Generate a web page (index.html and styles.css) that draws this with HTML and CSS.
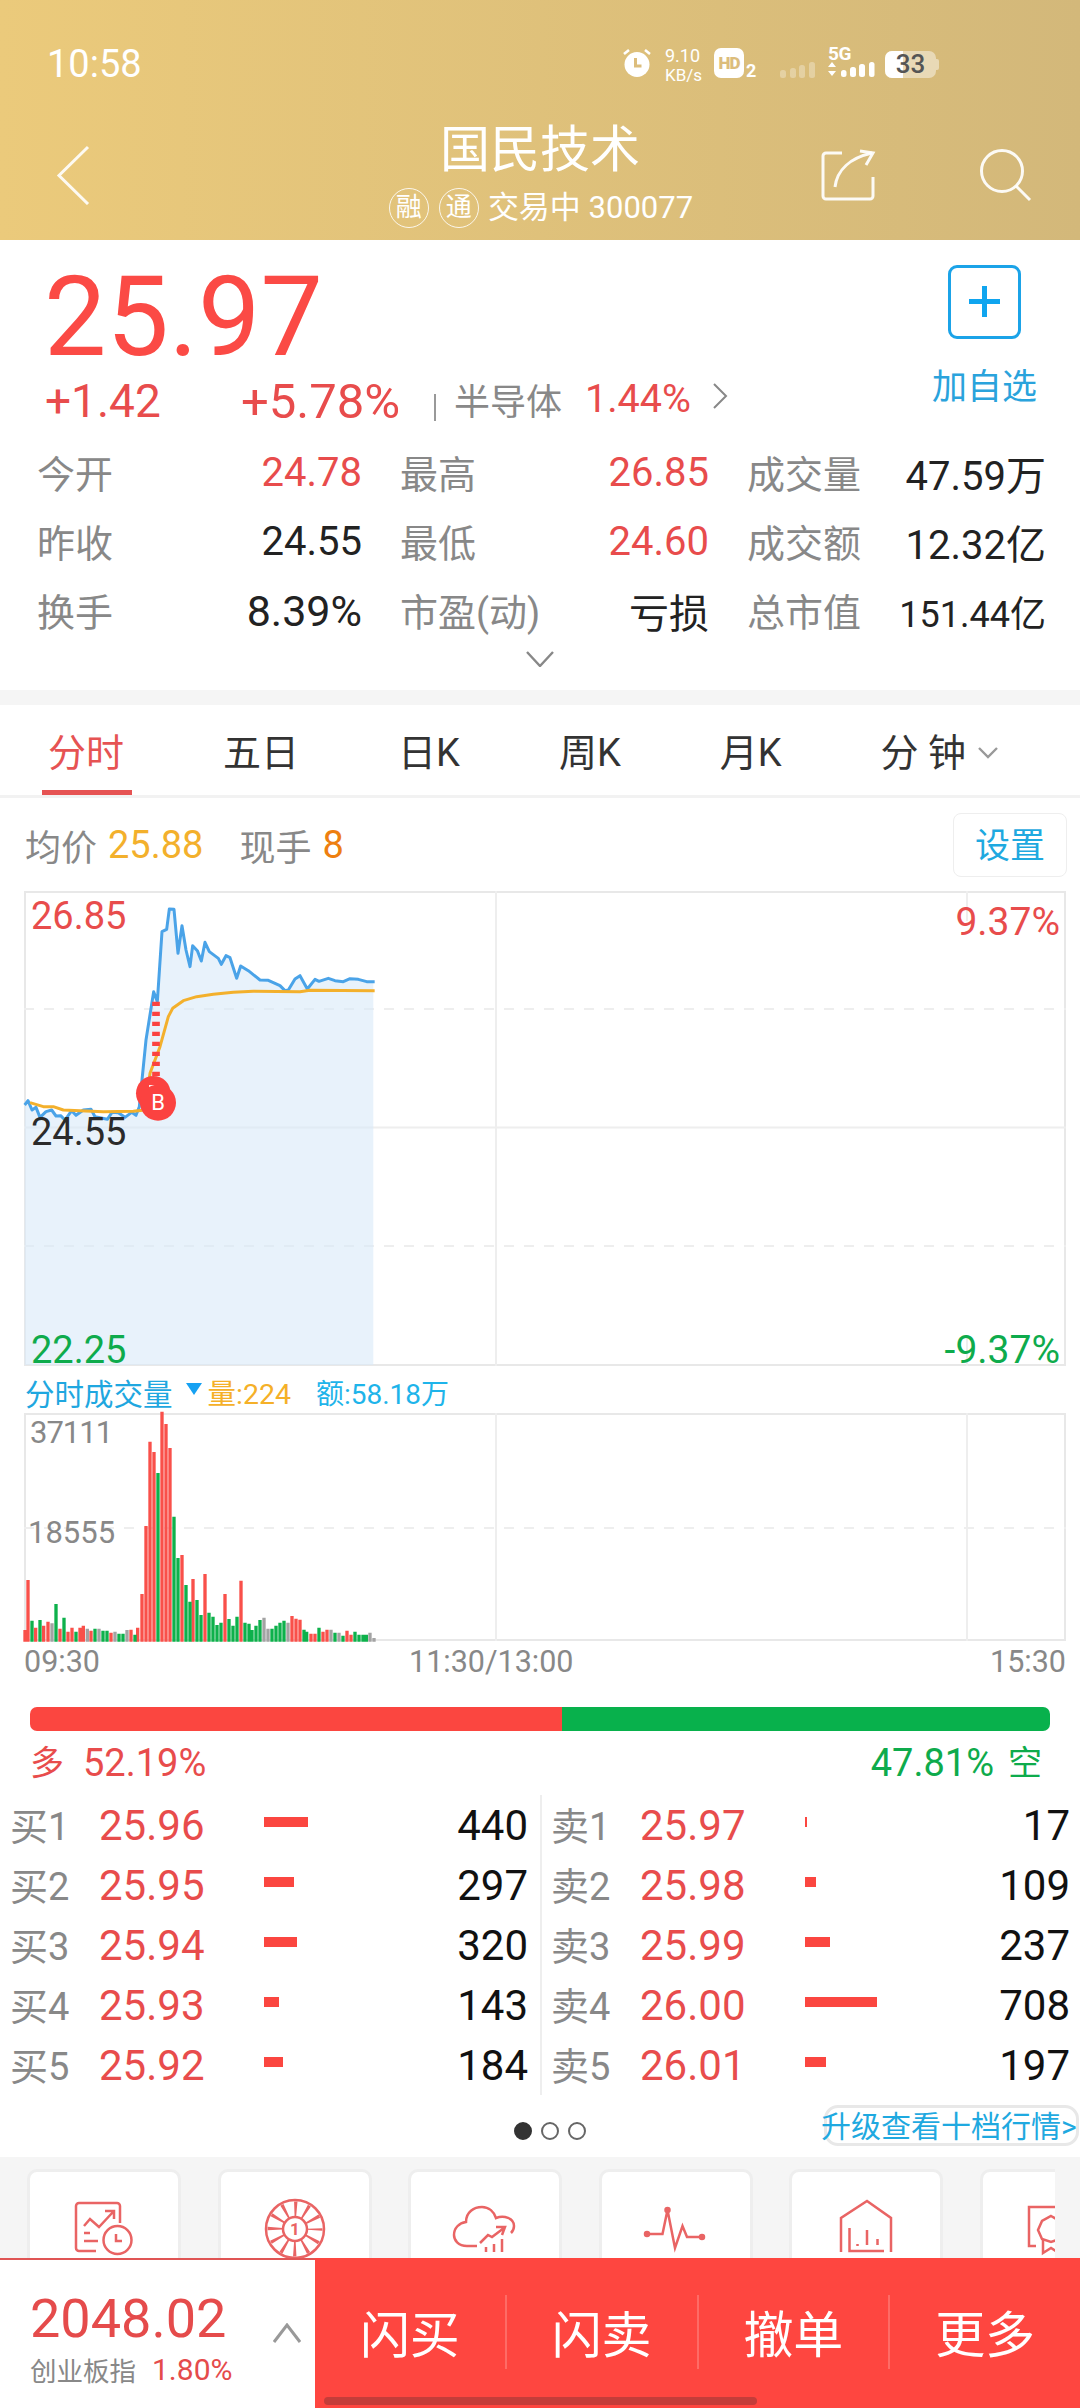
FILE: index.html
```html
<!DOCTYPE html>
<html lang="zh">
<head>
<meta charset="utf-8">
<title>国民技术</title>
<link rel="stylesheet" href="styles.css">
</head>
<body>
<div class="page">
  <header class="hero">
    <div class="status">
      <span class="time">10:58</span>
      <div class="status-right">
        <svg class="st-alarm" width="30" height="30" viewBox="0 0 30 30"><circle cx="15" cy="16.5" r="12.5" fill="#fff"/><path d="M2 6l5-4M28 6l-5-4" stroke="#fff" stroke-width="2.6" fill="none"/><path d="M13.5 10v8h6" stroke="#dcbd7c" stroke-width="3" fill="none"/></svg>
        <div class="net"><span class="net-a">9.10</span><span class="net-b">KB/s</span></div>
        <span class="hd">HD</span><span class="hd-n">2</span>
        <svg class="st-sig1" width="36" height="30" viewBox="0 0 36 30"><g fill="#fff" fill-opacity=".3"><rect x="0" y="21" width="6" height="8" rx="2.5"/><rect x="10" y="19" width="6" height="10" rx="2.5"/><rect x="19" y="16" width="6" height="13" rx="2.5"/><rect x="29" y="13" width="6" height="16" rx="2.5"/></g></svg>
        <div class="five">
          <span class="five-t">5G</span>
          <svg width="47" height="16" viewBox="0 0 47 16"><g fill="#fff"><path d="M0 5L4 0L8 5zM0 9h8L4 14z"/><rect x="13" y="8" width="5.500" height="7" rx="2.500"/><rect x="22" y="5" width="6" height="10" rx="2.500"/><rect x="31" y="2" width="6" height="13" rx="2.500"/><rect x="41" y="0" width="5.500" height="15" rx="2.500"/></g></svg>
        </div>
        <div class="battery"><span class="bat-fill"></span><span class="bat-num">33</span></div>
      </div>
    </div>
    <nav class="nav">
      <svg class="nav-back" width="34" height="60" viewBox="0 0 34 60"><path d="M32 2L3 30.500L32 59" fill="none" stroke="#fff" stroke-opacity=".9" stroke-width="3"/></svg>
      <div class="nav-mid">
        <div class="title">国民技术</div>
        <div class="sub"><span class="tag">融</span><span class="tag">通</span><span class="sub-t">交易中 300077</span></div>
      </div>
      <div class="nav-icons">
        <svg width="56" height="54" viewBox="0 0 56 54" fill="none" stroke="#fff" stroke-opacity=".92" stroke-width="3"><path d="M22 5H6a3 3 0 0 0-3 3V48a3 3 0 0 0 3 3H50a3 3 0 0 0 3-3V29"/><path d="M15 39C17 22 30 10 52 5"/><path d="M40 3L53 5L46 17"/></svg>
        <svg width="54" height="54" viewBox="0 0 54 54" fill="none" stroke="#fff" stroke-opacity=".92" stroke-width="3"><circle cx="24" cy="23" r="20.500"/><path d="M38 38L52 52"/></svg>
      </div>
    </nav>
  </header>

  <section class="quote">
    <div class="quote-top">
      <div class="quote-left">
        <div class="price">25.97</div>
        <div class="change">
          <span class="ch-a">+1.42</span>
          <span class="ch-b">+5.78%</span>
          <span class="ch-bar"></span>
          <span class="ch-c">半导体</span>
          <span class="ch-d">1.44%</span>
          <svg width="16" height="26" viewBox="0 0 16 26"><path d="M2 1l12 12L2 25" fill="none" stroke="#888" stroke-width="2"/></svg>
        </div>
      </div>
      <div class="add">
        <div class="add-btn"><span class="add-h"></span><span class="add-v"></span></div>
        <div class="add-t">加自选</div>
      </div>
    </div>
    <div class="stats">
      <div class="stat"><span class="k">今开</span><span class="v red">24.78</span></div>
      <div class="stat"><span class="k">最高</span><span class="v red">26.85</span></div>
      <div class="stat"><span class="k">成交量</span><span class="v">47.59万</span></div>
      <div class="stat"><span class="k">昨收</span><span class="v">24.55</span></div>
      <div class="stat"><span class="k">最低</span><span class="v red">24.60</span></div>
      <div class="stat"><span class="k">成交额</span><span class="v">12.32亿</span></div>
      <div class="stat"><span class="k">换手</span><span class="v pct">8.39%</span></div>
      <div class="stat"><span class="k">市盈(动)</span><span class="v">亏损</span></div>
      <div class="stat"><span class="k">总市值</span><span class="v small">151.44亿</span></div>
    </div>
    <div class="more"><svg width="28" height="16" viewBox="0 0 28 16"><path d="M1 1l13 14L27 1" fill="none" stroke="#888" stroke-width="2.400"/></svg></div>
  </section>

  <div class="tabs">
    <span class="tab on">分时</span>
    <span class="tab">五日</span>
    <span class="tab">日K</span>
    <span class="tab">周K</span>
    <span class="tab">月K</span>
    <span class="tab">分 钟<svg class="tab-chev" width="20" height="12" viewBox="0 0 20 12"><path d="M1 1l9 9 9-9" fill="none" stroke="#999" stroke-width="2.400"/></svg></span>
  </div>

  <div class="info">
    <span class="info-k">均价</span><span class="info-a">25.88</span>
    <span class="info-k info-k2">现手</span><span class="info-b">8</span>
    <span class="set">设置</span>
  </div>

  <div class="chart">
    <svg class="plot" width="1042" height="475" viewBox="0 0 1042 475">
      <g stroke="#eeeeee" stroke-width="2" fill="none">
        <path d="M472 0V475"/>
        <path d="M943 0V30M943 445V475"/>
        <path d="M0 236.500H1042"/>
        <path d="M0 118H1042M0 355H1042" stroke-dasharray="10 10"/>
      </g>
      <g transform="translate(-4 -11) scale(.33333)">
        <path fill="#d9e9f9" fill-opacity=".6" d="M14 675L24 662L36 690L48 682L60 712L78 695L95 690L108 708L122 707L135 720L155 692L168 706L190 690L213 688L225 710L262 718L276 697L295 698L315 712L335 697L348 706L358 680L378 480L401 335L412 365L426 155L440 148L448 87L462 88L474 220L486 137L498 210L510 260L518 197L532 212L544 243L555 187L568 215L595 235L604 253L618 227L630 233L650 295L662 258L685 272L720 300L745 301L780 317L795 332L805 330L825 297L840 287L862 327L885 298L897 304L925 295L945 302L970 305L990 296L1015 298L1040 305L1060 305V1455H14Z"/>
        <path fill="none" stroke="#4aa3e8" stroke-width="9" stroke-linejoin="round" d="M14 675L24 662L36 690L48 682L60 712L78 695L95 690L108 708L122 707L135 720L155 692L168 706L190 690L213 688L225 710L262 718L276 697L295 698L315 712L335 697L348 706L358 680L378 480L401 335L412 365L426 155L440 148L448 87L462 88L474 220L486 137L498 210L510 260L518 197L532 212L544 243L555 187L568 215L595 235L604 253L618 227L630 233L650 295L662 258L685 272L720 300L745 301L780 317L795 332L805 330L825 297L840 287L862 327L885 298L897 304L925 295L945 302L970 305L990 296L1015 298L1040 305L1064 305"/>
        <path fill="none" stroke="#f3b02c" stroke-width="9" stroke-linejoin="round" d="M30 668L70 680L100 680L130 690L180 692L250 695L340 694L375 690L390 580L420 500L445 410L458 385L490 362L530 350L580 343L640 337L700 334L840 335L870 331L1064 332"/>
        <path fill="none" stroke="#fb4240" stroke-width="23" stroke-dasharray="13 17" d="M408 365V600"/>
        <circle cx="400" cy="640" r="52" fill="#fb4240"/>
        <path d="M387 615h22v8h-14v8h-8z" fill="#fff" fill-opacity=".9"/>
        <circle cx="414" cy="668" r="54" fill="#fb4240"/>
      </g>
    </svg>
    <span class="pin">B</span>
    <span class="lbl lbl-hi">26.85</span>
    <span class="lbl lbl-mid">24.55</span>
    <span class="lbl lbl-lo">22.25</span>
    <span class="lbl lbl-up">9.37%</span>
    <span class="lbl lbl-dn">-9.37%</span>
  </div>

  <div class="vol-head">
    <span class="vh-a">分时成交量</span>
    <svg class="vh-tri" width="16" height="12" viewBox="0 0 16 12"><path d="M0 0H16L8 12z" fill="#16a1f2"/></svg>
    <span class="vh-b">量:224</span>
    <span class="vh-c">额:58.18万</span>
  </div>

  <div class="vol">
    <svg class="plot" width="1042" height="228" viewBox="0 0 1042 228">
      <g stroke="#eeeeee" stroke-width="2" fill="none">
        <path d="M472 0V228M943 0V228"/>
        <path d="M0 115H1042" stroke-dasharray="10 10"/>
      </g>
      <g transform="translate(-24 -53) scale(.33333)" fill="none" stroke-width="10">
        <path stroke="#f9504a" d="M75 845V810M84 845V660M107 845V803M131 845V797M144 845V785M180 845V806M204 845V815M216 845V803M240 845V803M250 845V797M273 845V812M333 845V818M393 845V809M413 845V803M426 845V702M438 845V498M450 845V245M462 845V276M486 845V155M498 845V192M510 845V264M546 845V585M579 845V657M615 845V642M675 845V702M723 845V662M876 845V768M888 845V776M900 845V779M933 845V821M945 845V821M969 845V815M981 845V809M1041 845V812M1053 845V824"/>
        <path stroke="#0db14b" d="M96 845V782M120 845V780M168 845V732M192 845V773M228 845V815M285 845V806M309 845V812M321 845V812M357 845V821M369 845V821M405 845V824M474 845V339M522 845V470M534 845V594M558 845V675M570 845V725M591 845V720M603 845V765M627 845V758M639 845V770M651 845V795M663 845V788M687 845V777M699 845V797M711 845V770M735 845V788M747 845V791M756 845V810M768 845V797M780 845V780M816 845V806M828 845V797M840 845V788M852 845V782M912 845V809M920 845V815M957 845V803M1005 845V818M1029 845V827M1065 845V815M1077 845V824M1089 845V824M1099 845V824"/>
        <path stroke="#a3a3a3" d="M156 845V790M262 845V806M297 845V806M345 845V815M381 845V810M792 845V773M804 845V806M864 845V788M993 845V809M1017 845V818M1110 845V818M1122 845V834"/>
      </g>
    </svg>
    <span class="vlbl vlbl-a">37111</span>
    <span class="vlbl vlbl-b">18555</span>
  </div>

  <div class="times"><span>09:30</span><span>11:30/13:00</span><span class="t-end">15:30</span></div>

  <div class="ratio"><span class="r-up"></span><span class="r-dn"></span></div>
  <div class="ratio-t">
    <div class="rt-up"><span class="rt-c">多</span><span>52.19%</span></div>
    <div class="rt-dn"><span>47.81%</span><span class="rt-c">空</span></div>
  </div>

  <div class="book">
    <div class="side side-buy">
      <div class="row"><span class="r-k">买1</span><span class="r-p">25.96</span><span class="r-b"><i style="width:44px"></i></span><span class="r-v">440</span></div>
      <div class="row"><span class="r-k">买2</span><span class="r-p">25.95</span><span class="r-b"><i style="width:30px"></i></span><span class="r-v">297</span></div>
      <div class="row"><span class="r-k">买3</span><span class="r-p">25.94</span><span class="r-b"><i style="width:33px"></i></span><span class="r-v">320</span></div>
      <div class="row"><span class="r-k">买4</span><span class="r-p">25.93</span><span class="r-b"><i style="width:15px"></i></span><span class="r-v">143</span></div>
      <div class="row"><span class="r-k">买5</span><span class="r-p">25.92</span><span class="r-b"><i style="width:19px"></i></span><span class="r-v">184</span></div>
    </div>
    <div class="side side-sell">
      <div class="row"><span class="r-k">卖1</span><span class="r-p">25.97</span><span class="r-b"><i style="width:2px"></i></span><span class="r-v">17</span></div>
      <div class="row"><span class="r-k">卖2</span><span class="r-p">25.98</span><span class="r-b"><i style="width:11px"></i></span><span class="r-v">109</span></div>
      <div class="row"><span class="r-k">卖3</span><span class="r-p">25.99</span><span class="r-b"><i style="width:25px"></i></span><span class="r-v">237</span></div>
      <div class="row"><span class="r-k">卖4</span><span class="r-p">26.00</span><span class="r-b"><i style="width:72px"></i></span><span class="r-v">708</span></div>
      <div class="row"><span class="r-k">卖5</span><span class="r-p">26.01</span><span class="r-b"><i style="width:21px"></i></span><span class="r-v">197</span></div>
    </div>
  </div>

  <div class="pager">
    <span></span>
    <div class="dots"><i class="dot on"></i><i class="dot"></i><i class="dot"></i></div>
    <span class="upgrade">升级查看十档行情&gt;</span>
  </div>

  <div class="tools">
    <div class="tool-list">
      <div class="card"><svg width="70" height="70" viewBox="0 0 70 70" class="ico"><path d="M27 56H10a3 3 0 0 1-3-3V11a3 3 0 0 1 3-3H48a3 3 0 0 1 3 3V28"/><path d="M15 31L21 24L30 32L44 17M36 16H45V24"/><path d="M15 38H21M15 46H29"/><circle cx="48.500" cy="45" r="14"/><path d="M47 39V46H53"/></svg></div>
      <div class="card"><svg width="70" height="70" viewBox="0 0 70 70" class="ico"><circle cx="35" cy="34" r="29"/><circle cx="35" cy="34" r="12"/><circle cx="35" cy="34" r="20" stroke-width="15" stroke-dasharray="2.600 7.870" stroke-dashoffset="1.300"/><text x="35" y="40" class="ico-t">1</text></svg></div>
      <div class="card"><svg width="70" height="70" viewBox="0 0 70 70" class="ico"><path d="M27 51H17C8 51 4 45 4 40C4 33 9 28 16 27C16 17 24 12 32 12C39 12 44 17 46 23C54 20 64 23 64 31C64 34 63 36 61 38"/><path d="M30 48L38 40L42 42L54 33M46 32L55 32L52 40"/><path d="M36 52V57M44 49V57M52 44V57"/></svg></div>
      <div class="card"><svg width="70" height="70" viewBox="0 0 70 70" class="ico"><path d="M6 39H21.500L26.500 15L34 53L41.500 31L46 42H61"/><circle cx="6" cy="39" r="2" class="fill"/><circle cx="61" cy="42" r="2" class="fill"/><circle cx="26.500" cy="15" r="2" class="fill"/></svg></div>
      <div class="card"><svg width="70" height="70" viewBox="0 0 70 70" class="ico"><path d="M10 57V23L36 6L60 23V57"/><path d="M18.500 33V56H53"/><path d="M36 35V50M46.500 44V50M26.500 49V51"/></svg></div>
      <div class="card"><svg width="70" height="70" viewBox="0 0 70 70" class="ico"><path d="M14 51H7V12H50"/><path d="M29 21L38 26L42 35L38 44L29 47L20 44L16 35L20 26Z"/><path d="M21 44V58L29 53L37 58V44"/></svg></div>
    </div>
  </div>

  <footer class="bottom">
    <div class="index">
      <div class="index-t">
        <div class="idx-n">2048.02</div>
        <div class="idx-s"><span class="idx-k">创业板指</span><span class="idx-p">1.80%</span></div>
      </div>
      <svg class="idx-c" width="28" height="20" viewBox="0 0 28 20"><path d="M1 19L14 2L27 19" fill="none" stroke="#999" stroke-width="3"/></svg>
    </div>
    <div class="actions">
      <span class="act">闪买</span>
      <span class="act">闪卖</span>
      <span class="act">撤单</span>
      <span class="act">更多</span>
      <span class="homebar"></span>
    </div>
  </footer>
</div>
</body>
</html>
```
FILE: styles.css
```css
* { box-sizing: border-box; margin: 0; padding: 0; }
html, body { width: 1080px; height: 2408px; background: #fff; overflow: hidden; }
body { font-family: Roboto, "Noto Sans CJK SC", sans-serif; color: #222; }
.page { width: 1080px; height: 2408px; display: flex; flex-direction: column; overflow: hidden; }

.hero { height: 240px; flex: none; background: linear-gradient(90deg, #ebca7b, #d3b87a); color: #fff; }
.status { height: 120px; padding: 46px 144px 0 47px; display: flex; justify-content: space-between; align-items: flex-start; }
.time { font-size: 38px; line-height: 36px; }
.status-right { display: flex; align-items: flex-start; }
.st-alarm { margin-top: 2px; }
.net { display: flex; flex-direction: column; margin-left: 13px; width: 38px; }
.net-a { font-size: 18px; line-height: 20px; }
.net-b { font-size: 17px; line-height: 16px; margin-top: 1px; }
.hd { width: 30px; height: 30px; margin-left: 11px; margin-top: 2px; background: #fff; color: #dcbd7c; border-radius: 7px; font-size: 17px; font-weight: 900; line-height: 30px; text-align: center; letter-spacing: -1px; }
.hd-n { font-size: 18px; font-weight: 700; line-height: 16px; margin-top: 17px; margin-left: 2px; width: 12px; }
.st-sig1 { margin-left: 22px; margin-top: 3px; }
.five { margin-left: 12px; width: 47px; display: flex; flex-direction: column; }
.five-t { font-size: 19px; font-weight: 700; line-height: 16px; letter-spacing: -.5px; }
.battery { position: relative; width: 51px; height: 27px; margin-left: 10px; margin-top: 5px; background: rgba(255,255,255,.45); border-radius: 7px; text-align: center; }
.battery::after { content: ""; position: absolute; right: -3px; top: 8px; width: 3px; height: 11px; background: rgba(255,255,255,.45); border-radius: 0 2px 2px 0; }
.bat-fill { position: absolute; left: 0; top: 0; width: 18px; height: 27px; background: #fff; border-radius: 7px 0 0 7px; }
.bat-num { position: relative; color: #555; font-size: 26px; font-weight: 500; line-height: 27px; }

.nav { height: 120px; display: grid; grid-template-columns: 1fr auto 1fr; padding: 0 48px 0 56px; }
.nav-back { margin-top: 25px; }
.nav-mid { display: flex; flex-direction: column; align-items: center; }
.title { font-size: 50px; line-height: 60px; margin-left: -8px; }
.sub { display: flex; align-items: center; height: 40px; margin-top: 8px; margin-left: -6px; }
.tag { width: 40px; height: 40px; border: 1.500px solid rgba(255,255,255,.85); border-radius: 50%; font-size: 26px; line-height: 36px; text-align: center; margin-right: 10px; }
.tag + .tag { margin-right: 9px; }
.sub-t { font-size: 31px; line-height: 40px; }
.nav-icons { display: flex; justify-content: flex-end; gap: 102px; margin-top: 28px; height: 56px; }

.quote { height: 450px; flex: none; background: #fff; }
.quote-top { display: flex; justify-content: space-between; padding: 26px 44px 0 44px; height: 186px; }
.quote-left { flex: none; }
.price { font-size: 111px; line-height: 102px; color: #fb4a45; }
.change { display: flex; align-items: center; height: 50px; margin-top: 8px; margin-left: 1px; color: #e84c4c; }
.ch-a { font-size: 46px; width: 196px; }
.ch-b { font-size: 49px; width: 193px; }
.ch-bar { width: 2px; height: 27px; background: #999; margin-top: 12px; margin-right: 18px; }
.ch-c { font-size: 36px; color: #888; width: 131px; margin-top: -5px; }
.ch-d { font-size: 39.500px; width: 127px; margin-top: -5px; }
.change svg { margin-top: -11px; }
.add { flex: none; display: flex; flex-direction: column; align-items: center; width: 103px; }
.add-btn { flex: none; position: relative; width: 73px; height: 74px; margin-top: -1px; border: 3px solid #1ba3e8; border-radius: 9px; }
.add-h { position: absolute; left: 18px; top: 31px; width: 31px; height: 5px; background: #10a5ef; }
.add-v { position: absolute; left: 31px; top: 18px; width: 5px; height: 31px; background: #10a5ef; }
.add-t { font-size: 35px; line-height: 44px; margin-top: 27px; color: #2aa3dc; white-space: nowrap; }

.stats { display: grid; grid-template-columns: 325px 309px 299px; column-gap: 38px; padding: 12px 0 0 37px; grid-auto-rows: 69px; }
.stat { display: flex; justify-content: space-between; align-items: center; }
.k { font-size: 38px; color: #888; margin-bottom: 3px; }
.v { font-size: 40px; color: #222; }
.v.small { font-size: 36px; }
.v.pct { font-size: 43px; }
.red { color: #e84c4c; }
.more { display: flex; justify-content: center; margin-top: 6px; }

.tabs { flex: none; margin-top: 15px; height: 93px; padding: 0 0 0 48px; display: flex; gap: 99px; align-items: flex-start; background: #fff; position: relative; box-shadow: 0 -15px 0 #f5f5f5; border-bottom: 3px solid #f2f2f2; }
.tab { font-size: 38px; color: #333; height: 90px; line-height: 97px; position: relative; white-space: pre; }
.tab.on { color: #e65353; }
.tab.on::after { content: ""; position: absolute; left: -6px; right: -8px; bottom: 0; height: 5px; background: #e65353; }
.tab-chev { margin-left: 12px; vertical-align: 7px; }

.info { flex: none; height: 93px; padding: 0 13px 0 25px; display: flex; align-items: center; font-size: 35px; }
.info-k { color: #888; font-size: 36px; }
.info-a { color: #f3b02c; margin-left: 11px; font-size: 38px; }
.info-k2 { margin-left: 36px; }
.info-b { color: #ee7f10; margin-left: 11px; font-size: 38px; }
.set { margin-left: auto; width: 114px; height: 64px; border: 1px solid #eee; border-radius: 8px; color: #1fa9e0; font-size: 35px; line-height: 66px; text-align: center; }

.chart { position: relative; flex: none; width: 1042px; height: 475px; margin-left: 24px; border: 2px solid #e8e8e8; }
.plot { display: block; position: absolute; left: -2px; top: -2px; overflow: visible; }
.pin { position: absolute; left: 120px; top: 197px; width: 24px; font-size: 22px; line-height: 26px; color: #fff; text-align: center; }
.lbl { position: absolute; font-size: 38px; line-height: 40px; }
.lbl-hi { left: 5px; top: 3px; color: #e84c4c; }
.lbl-mid { left: 5px; top: 219px; color: #2b2b2b; }
.lbl-lo { left: 5px; bottom: -6px; color: #0eab4c; }
.lbl-up { right: 4px; top: 9px; color: #e84c4c; }
.lbl-dn { right: 4px; bottom: -6px; color: #0eab4c; }
.lbl-up, .lbl-dn { font-size: 39px; }

.vol-head { flex: none; height: 47px; padding: 4px 0 0 25px; display: flex; align-items: center; }
.vh-a { font-size: 29.500px; color: #1fa7e0; }
.vh-tri { margin-left: 13px; margin-top: -6px; }
.vh-b { font-size: 28.500px; color: #f5b028; margin-left: 6px; }
.vh-c { font-size: 28px; color: #1eb4ea; margin-left: 25px; }

.vol { position: relative; flex: none; width: 1042px; height: 228px; margin-left: 24px; border: 2px solid #e8e8e8; }
.vlbl { position: absolute; left: 2px; font-size: 31px; line-height: 36px; color: #888; }
.vlbl-a { top: 0; left: 4px; letter-spacing: -1px; }
.vlbl-b { top: 100px; }

.times { flex: none; height: 49px; margin-left: 24px; width: 1042px; display: grid; grid-template-columns: 385px auto 1fr; font-size: 30.500px; line-height: 42px; color: #888; }
.t-end { text-align: right; }

.ratio { flex: none; display: flex; height: 24px; margin: 17px 30px 0; border-radius: 7px; overflow: hidden; }
.r-up { flex: 532; background: #fb4640; }
.r-dn { flex: 488; background: #08b14c; }
.ratio-t { flex: none; height: 64px; padding: 10px 38px 0 30px; display: flex; justify-content: space-between; font-size: 38px; line-height: 44px; }
.rt-up { color: #e84c4c; display: flex; gap: 19px; }
.rt-dn { color: #0eab4c; display: flex; gap: 14px; }
.rt-c { font-size: 34px; }

.book { flex: none; height: 300px; display: flex; }
.side { display: flex; flex-direction: column; }
.side-buy { width: 540px; padding: 0 12px 0 10px; }
.side-sell { width: 540px; padding: 0 10px 0 9px; border-left: 2px solid #eee; }
.row { height: 60px; display: grid; grid-template-columns: 89px 165px 1fr auto; align-items: center; }
.r-k { font-size: 38px; color: #888; white-space: nowrap; margin-bottom: 4px; }
.r-p { font-size: 42px; color: #e84c4c; }
.r-b { display: flex; align-items: center; height: 10px; margin-bottom: 6px; }
.r-b i { display: block; height: 10px; background: #fb4640; }
.r-v { font-size: 42px; color: #111; }

.pager { flex: none; height: 62px; display: grid; grid-template-columns: 514px auto 1fr; align-items: center; }
.dots { display: flex; gap: 9px; margin-top: 10px; }
.dot { display: block; width: 18px; height: 18px; border-radius: 50%; border: 2px solid #666; }
.dot.on { background: #333; border-color: #333; }
.upgrade { justify-self: end; width: 255px; height: 41px; margin-right: 1px; margin-bottom: 1px; border: 3px solid #e8e8e8; border-radius: 14px; color: #1fa9e0; font-size: 30px; line-height: 38px; white-space: nowrap; text-indent: -6px; }

.tools { flex: none; height: 101px; width: 1080px; background: #f5f5f5; padding: 12px 25px 0 27px; overflow: hidden; }
.tool-list { display: flex; gap: 36.500px; overflow: hidden; height: 200px; }
.card { flex: none; width: 154px; height: 200px; background: #fff; border: 3px solid #eee; border-radius: 10px; display: flex; justify-content: center; padding-top: 23px; }
.ico { fill: none; stroke: #e96464; stroke-width: 2.500; flex: none; }
.ico .fill { fill: #e96464; }
.ico-t { font-family: Roboto, sans-serif; font-size: 17px; font-weight: 700; fill: #e96464; stroke: none; text-anchor: middle; }

.bottom { flex: none; height: 150px; display: flex; position: relative; }
.index { width: 315px; background: #fff; border-top: 2px solid #e05555; padding-left: 30px; display: flex; }
.index-t { width: 243px; padding-top: 29px; }
.idx-n { font-size: 54px; line-height: 60px; color: #e54b4b; }
.idx-s { display: flex; align-items: center; height: 40px; gap: 16px; white-space: nowrap; }
.idx-k { font-size: 26.500px; color: #888; }
.idx-p { font-size: 30px; color: #e54b4b; }
.idx-c { margin-top: 63px; }
.actions { flex: 1; background: #fe4640; display: flex; position: relative; padding-top: 37px; align-items: flex-start; }
.act { flex: 1; height: 74px; color: #fff; font-size: 50px; line-height: 82px; text-align: center; border-right: 2px solid rgba(255,255,255,.2); }
.act:nth-child(4) { border-right: 0; }
.homebar { position: absolute; left: 9px; top: 139px; width: 433px; height: 8px; background: #c43d3a; border-radius: 4px; }
```
